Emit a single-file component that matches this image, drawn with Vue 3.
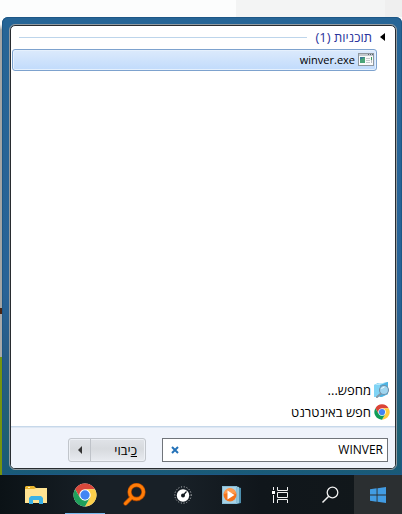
<script setup>
import { ref } from 'vue'

const query = ref('WINVER')
</script>

<template>
  <div class="desktop" dir="rtl" lang="he">
    <main class="start-menu">
      <div class="panel">
        <section class="results">
          <h2 class="group">
            <svg class="arrow" width="5" height="8" viewBox="0 0 5 8" aria-hidden="true"><path d="M5 0v8L0 4z" fill="#000" /></svg>
            <span class="group-name">תוכניות (1)</span>
            <span class="rule"></span>
          </h2>
          <button class="result" type="button">
            <svg width="16" height="14" viewBox="0 0 16 14" aria-hidden="true">
              <path d="M0 0h16v13H0z" fill="#8f979e" />
              <path d="M1 1h14v11H1z" fill="#fafafa" />
              <path d="M1 1h14v2H1z" fill="#c3c9ce" />
              <path d="M10 1h1v1h-1zM12 1h1v1h-1zM14 1h1v1h-1z" fill="#59646e" />
              <path d="M2 4h5v6H2z" fill="#397b94" /><path d="M2 10V7l5-3v6z" fill="#4aa477" />
              <path d="M8 5h4v1H8zM8 7h4v1H8zM8 9h4v1H8z" fill="#c6c9cc" />
              <path d="M13 4h1v3h-1z" fill="#3c9c60" /><path d="M13 7h1v3h-1z" fill="#b8bcc0" />
            </svg>
            <span class="file" dir="ltr">winver.exe</span>
          </button>
        </section>

        <nav class="links">
          <a href="#more">
            <svg width="16" height="16" viewBox="0 0 16 16" aria-hidden="true">
              <path d="M0 3l4-2 5 0 5-1v12l-6 3H0z" fill="#54bdea" />
              <path d="M0 3h6v12H0z" fill="#80d4f5" /><path d="M6 3l8-3v12l-8 3z" fill="#4db3e2" />
              <path d="M0 3l5-2 6 0-5 2z" fill="#b5e7fa" />
              <path d="M7 11.5L3 15" stroke="#8499a8" stroke-width="2" stroke-linecap="round" />
              <circle cx="10" cy="8" r="4.5" fill="#b5dff4" fill-opacity=".8" stroke="#718fa6" stroke-width="1.1" />
              <path d="M7.5 7q1-2 3-2" fill="none" stroke="#fff" />
            </svg>
            <span>מחפש...</span>
          </a>
          <a href="#web">
            <svg width="16" height="16" viewBox="2 2 44 44" aria-hidden="true">
              <circle cx="24" cy="24" r="21" fill="#fff" />
              <path d="M24 3a21 21 0 0 1 18.2 10.5H24A10.5 10.5 0 0 0 14.9 29.2L5.8 13.5A21 21 0 0 1 24 3z" fill="#db4437" />
              <path d="M42.2 13.5A21 21 0 0 1 24 45l9.1-15.8A10.5 10.5 0 0 0 24 13.5z" fill="#ffcd40" />
              <path d="M5.8 13.5A21 21 0 0 0 24 45l9.1-15.8a10.5 10.5 0 0 1-18.2 0z" fill="#0f9d58" />
              <circle cx="24" cy="24" r="8.5" fill="#4285f4" />
            </svg>
            <span>חפש באינטרנט</span>
          </a>
        </nav>

        <footer class="footer">
          <div class="search">
            <input v-model="query" type="text" aria-label="חיפוש" />
            <button type="button" aria-label="נקה" @click="query = ''">
              <svg width="8" height="8" viewBox="0 0 8 8" aria-hidden="true"><path d="M1 1l6 6M7 1L1 7" stroke="#2472b8" stroke-width="2" /></svg>
            </button>
          </div>
          <div class="power">
            <button class="shutdown" type="button"><u>כ</u>יבוי</button>
            <button class="options" type="button" aria-label="אפשרויות">
              <svg width="4" height="8" viewBox="0 0 4 8" aria-hidden="true"><path d="M4 0v8L0 4z" fill="#333" /></svg>
            </button>
          </div>
        </footer>
      </div>
    </main>

    <nav class="taskbar">
      <button class="start" type="button" aria-label="התחל">
        <svg width="16" height="16" viewBox="0 0 16 16" aria-hidden="true">
          <path d="M0 2.2L6.6 1.3V7.5H0zM7.5 1.2L16 0v7.5H7.5zM0 8.5h6.6v6.2L0 13.8zM7.5 8.5H16V16l-8.5-1.2z" fill="#429ce3" />
        </svg>
      </button>
      <button type="button" aria-label="חיפוש">
        <svg width="18" height="18" viewBox="0 0 18 18" aria-hidden="true">
          <circle cx="11.5" cy="6.5" r="5.3" fill="none" stroke="#f2f2f2" stroke-width="1.3" /><path d="M7.7 10.3L1.5 16.5" stroke="#f2f2f2" stroke-width="1.5" />
        </svg>
      </button>
      <button type="button" aria-label="תצוגת משימות">
        <svg width="17" height="16" viewBox="0 0 17 16" aria-hidden="true">
          <path d="M5.5 0v3.5h10V0M5.5 16v-3.5h10V16M5.5 5.5h10v5h-10zM1.5 0v3M1.5 8v8" fill="none" stroke="#f2f2f2" />
          <path d="M0 4h3v3H0z" fill="#fff" />
        </svg>
      </button>
      <button type="button" aria-label="נגן מדיה">
        <svg width="20" height="20" viewBox="0 0 20 20" aria-hidden="true">
          <path d="M15 2l4 1v15l-4 1z" fill="#4d8fae" /><path d="M13 1l4 1v16l-4 1z" fill="#8fc5db" />
          <path d="M0 1h15v18H0z" fill="#88bdd7" /><path d="M1 2h13v16H1z" fill="#a8d1e3" />
          <circle cx="8" cy="10" r="6.5" fill="#f3731c" /><path d="M2 9a6 6 0 0 1 12 0q-6-2-12 0z" fill="#ff9b4e" />
          <path d="M5.5 5.5v9l7-4.5z" fill="#fff" />
        </svg>
      </button>
      <button type="button" aria-label="מדד">
        <svg width="18" height="18" viewBox="0 0 18 18" aria-hidden="true">
          <circle cx="9" cy="9" r="8.2" fill="none" stroke="#c8cbcd" stroke-width="1" stroke-dasharray="1 1.8" />
          <circle cx="9" cy="9.5" r="6.2" fill="#fff" /><circle cx="9" cy="9.5" r="2" fill="#12191e" />
          <path d="M9 9.5l3.5-4" stroke="#12191e" stroke-width="1.2" />
        </svg>
      </button>
      <button type="button" aria-label="חיפוש קבצים">
        <svg width="24" height="24" viewBox="0 0 24 24" aria-hidden="true">
          <circle cx="14.5" cy="9" r="7" fill="none" stroke="#a94600" stroke-width="4.4" /><path d="M9.5 14.5l-6 6" stroke="#a94600" stroke-width="4.4" stroke-linecap="round" />
          <circle cx="14.5" cy="9" r="7" fill="none" stroke="#ff7d08" stroke-width="3" /><path d="M9.5 14.5l-6 6" stroke="#ff7d08" stroke-width="3" stroke-linecap="round" />
        </svg>
      </button>
      <button class="running" type="button" aria-label="Chrome">
        <svg width="24" height="24" viewBox="2 2 44 44" aria-hidden="true">
          <circle cx="24" cy="24" r="21" fill="#fff" />
          <path d="M24 3a21 21 0 0 1 18.2 10.5H24A10.5 10.5 0 0 0 14.9 29.2L5.8 13.5A21 21 0 0 1 24 3z" fill="#d9483b" />
          <path d="M42.2 13.5A21 21 0 0 1 24 45l9.1-15.8A10.5 10.5 0 0 0 24 13.5z" fill="#fdd04b" />
          <path d="M5.8 13.5A21 21 0 0 0 24 45l9.1-15.8a10.5 10.5 0 0 1-18.2 0z" fill="#1fa05b" />
          <circle cx="24" cy="24" r="8.5" fill="#4285f4" />
        </svg>
      </button>
      <button type="button" aria-label="סייר הקבצים">
        <svg width="22" height="18" viewBox="0 0 22 18" aria-hidden="true">
          <path d="M1 0h8l2 2h10v15H0V1z" fill="#e9b52f" /><path d="M3 1h2v1H3z" fill="#fff3c2" />
          <path d="M0 3h9l2-1h11v15H0z" fill="#ffe392" />
          <path d="M4 18v-6l2-2h10l2 2v6h-4v-4H8v4z" fill="#3bb2e6" />
        </svg>
      </button>
    </nav>
  </div>
</template>

<style>
body { margin: 0; }
</style>

<style scoped>
.desktop {
  display: flex;
  flex-direction: column;
  box-sizing: border-box;
  min-height: 100vh;
  padding-top: 17px;
  font: 13px/16px "Open Sans", "Noto Sans", "DejaVu Sans", sans-serif;
  color: #000;
  background:
    linear-gradient(90deg, #fcfdfd 236px, #f3f4f4 236px 385px, #efefef 385px) top / 100% 17px no-repeat,
    linear-gradient(#fcfdfd 0 24px, #a3a5a4 30px 308px, #4a2512 308px 314px, #a9aaa9 314px 357px, #75940f 357px);
}
button {
  padding: 0;
  border: 0;
  background: none;
  font: inherit;
  color: inherit;
}
svg { display: block; flex: none; }
.start-menu {
  display: flex;
  flex: 1;
  box-sizing: border-box;
  margin-left: 2px;
  padding: 7px 5px 5px 7px;
  border-radius: 6px 6px 0 0;
  background: linear-gradient(#266596 0, #286397 60%, #285c85 75%, #1e6073 90%, #195a78);
  box-shadow: inset 0 0 0 1px #1d5786;
}
.panel {
  display: flex;
  flex: 1;
  flex-direction: column;
  min-width: 0;
  border: 1px solid #282c30;
  border-radius: 5px;
  margin: 1px;
  overflow: hidden;
  background: #fff;
  outline: 1px solid #929ba1;
}
.results { flex: 1; padding: 3px 10px 0 1px; }
.group {
  display: flex;
  align-items: center;
  gap: 8px;
  height: 16px;
  margin: 0 0 4px;
  font-size: 13px;
  font-weight: 400;
  color: #2a349c;
}
.rule { flex: 1; height: 1px; margin-left: 7px; background: #bdd5eb; }
.result {
  display: flex;
  align-items: center;
  gap: 3px;
  box-sizing: border-box;
  width: calc(100% - 8px);
  height: 22px;
  margin-right: 8px;
  padding: 0 2px;
  border: 1px solid #7da2ce;
  border-radius: 3px;
  background: linear-gradient(#dceafc, #c1dbfc);
  box-shadow: inset 0 0 0 1px #e5f0fd;
}
.file { font-size: 11px; }
.links { display: flex; flex-direction: column; padding: 0 5px 3px; }
.links a {
  display: flex;
  align-items: center;
  gap: 3px;
  height: 22px;
  color: #000;
  text-decoration: none;
}
.footer {
  display: flex;
  gap: 16px;
  padding: 11px 7px 6px 57px;
  border-top: 1px solid #c7d8ea;
  background: #eff3fb;
  box-shadow: inset 0 1px #dde7f3;
}
.search {
  display: flex;
  flex: 1;
  box-sizing: border-box;
  height: 24px;
  min-width: 0;
  border: 1px solid #70747a;
  background: #fff;
}
.search input {
  flex: 1;
  min-width: 0;
  padding: 0 4px;
  border: 0;
  outline: 0;
  background: none;
  font: inherit;
  font-size: 12px;
  color: #000;
}
.search button { display: grid; place-items: center; width: 23px; }
.power {
  display: flex;
  box-sizing: border-box;
  width: 78px;
  height: 24px;
  border: 1px solid #c1c5cb;
  border-radius: 3px;
  background: linear-gradient(#e0e3e8, #d7dade 45%, #e8ebf0);
  box-shadow: inset 0 0 0 1px #edf0f5;
}
.shutdown { flex: 1; padding-right: 8px; text-align: right; }
.options { display: grid; place-items: center; width: 22px; border-right: 1px solid #bfc3c9; }
.taskbar {
  display: flex;
  height: 39px;
  background: linear-gradient(90deg, #0b1216, #182027 25%, #182027 45%, #10161b 65%, #12181b);
}
.taskbar button {
  display: grid;
  place-items: center;
  box-sizing: border-box;
  width: 49px;
}
.taskbar .start { width: 48px; background: #2b2f31; }
.taskbar .running {
  background: linear-gradient(#76b9ed, #76b9ed) bottom / 40px 1px no-repeat;
}
</style>
